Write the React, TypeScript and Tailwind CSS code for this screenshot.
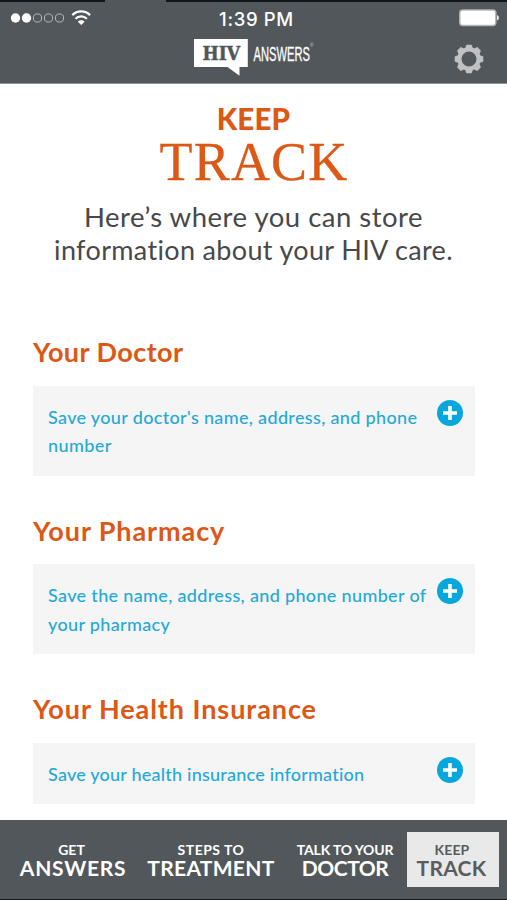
import clsx from "clsx";

const sections = [
  {
    title: "Your Doctor",
    titleClass: "tracking-[0.45px]",
    lines: [
      { text: "Save your doctor's name, address, and phone", className: "tracking-[0.34px]" },
      { text: "number", className: "tracking-[0.4px]" },
    ],
  },
  {
    title: "Your Pharmacy",
    titleClass: "tracking-[0.9px]",
    lines: [
      { text: "Save the name, address, and phone number of", className: "tracking-[0.34px]" },
      { text: "your pharmacy", className: "tracking-[0.34px]" },
    ],
  },
  {
    title: "Your Health Insurance",
    titleClass: "tracking-[0.93px]",
    lines: [{ text: "Save your health insurance information", className: "tracking-[0.22px]" }],
  },
];

const tabs = [
  { top: "GET", bottom: "ANSWERS", width: "w-[118px]", topClass: "-ml-[3px]", bottomClass: "tracking-[0.7px]" },
  { top: "STEPS TO", bottom: "TREATMENT", width: "w-[158px]", topClass: "tracking-[0.5px]", bottomClass: "tracking-[0.3px]" },
  { top: "TALK TO YOUR", bottom: "DOCTOR", width: "w-[110px]", topClass: "tracking-[-0.15px]", bottomClass: "tracking-[-0.5px]" },
  { top: "KEEP", bottom: "TRACK", width: "w-[92px]", topClass: "-ml-[2px] tracking-[0.1px]", bottomClass: "-ml-[3px] tracking-[0.3px]", active: true },
];

function StatusBar() {
  return (
    <div className="relative flex h-9 items-center justify-center">
      <svg className="absolute left-[10px] top-[6px]" width="84" height="20" viewBox="0 0 84 20">
        <circle cx="5.5" cy="10" r="4.7" fill="#fff" />
        <circle cx="16.5" cy="10" r="4.7" fill="#fff" />
        {[27.5, 38.5, 49.5].map((cx) => (
          <circle key={cx} cx={cx} cy="10" r="4.1" fill="none" stroke="#b9bbbd" strokeWidth="1" />
        ))}
        <g fill="none" stroke="#fff" strokeWidth="2.3">
          <path d="M62.3 7.1 A12.6 12.6 0 0 1 80.1 7.1" />
          <path d="M65.5 10.8 A8.1 8.1 0 0 1 76.9 10.8" />
        </g>
        <path d="M71.2 17 L67.8 13.7 A4.8 4.8 0 0 1 74.6 13.7 Z" fill="#fff" />
      </svg>
      <span className="-mt-[3px] ml-[6px] whitespace-nowrap font-['Inter',sans-serif] text-[18.5px] font-medium leading-5 tracking-[0.65px] text-white">
        1:39 PM
      </span>
      <svg className="absolute right-[8px] top-[7px]" width="40" height="18" viewBox="0 0 40 18">
        <rect x="0.8" y="1" width="36" height="15.5" rx="3" fill="#fff" stroke="#b4b6b8" strokeWidth="1.5" />
        <path d="M38 6 Q40 6.8 40 8.8 Q40 10.8 38 11.6 Z" fill="#e6e6e6" />
      </svg>
    </div>
  );
}

function Logo() {
  return (
    <svg width="122" height="40" viewBox="0 0 122 40">
      <path d="M0 1 H53.8 V29 H45.5 V37.8 L33.5 29 H0 Z" fill="#fff" />
      <text x="8.5" y="21.8" textLength="37.5" lengthAdjust="spacingAndGlyphs" fill="#50555a" fontFamily="DejaVu Serif, serif" fontWeight="700" fontSize="18.5" stroke="#50555a" strokeWidth="0.5">
        HIV
      </text>
      <text transform="translate(59.5 22.6) scale(0.6 1)" textLength="94" lengthAdjust="spacingAndGlyphs" fill="#fff" fontFamily="Liberation Sans, sans-serif" fontSize="20.5" stroke="#fff" strokeWidth="0.3">
        ANSWERS
      </text>
      <text x="116" y="8.5" fill="#c9cbcd" fontFamily="Liberation Sans, sans-serif" fontSize="4.5">
        ®
      </text>
    </svg>
  );
}

function Gear() {
  return (
    <svg width="30" height="30" viewBox="-15 -15 30 30">
      <circle r="9.6" fill="none" stroke="#bfc1c3" strokeWidth="4.2" />
      {[0, 45, 90, 135, 180, 225, 270, 315].map((deg) => (
        <path key={deg} transform={`rotate(${deg})`} d="M-4 -10.5 L-2.6 -14.3 H2.6 L4 -10.5 Z" fill="#bfc1c3" />
      ))}
    </svg>
  );
}

function Plus() {
  return (
    <svg className="absolute right-[12px] top-[14px]" width="26" height="26" viewBox="0 0 26 26">
      <circle cx="13" cy="13" r="13" fill="#06a7dc" />
      <path d="M13 6 V20 M6 13 H20" stroke="#fff" strokeWidth="3.6" />
    </svg>
  );
}

export default function App() {
  return (
    <div className="flex h-[900px] w-[507px] flex-col overflow-hidden bg-white font-['Lato',sans-serif]">
      <header className="relative h-[84px] shrink-0 border-b border-[#8f9294] bg-[#52575b]">
        <div className="flex h-[2px] justify-between">
          <div className="w-[105px] bg-[#11161b]" />
          <div className="w-[341px] bg-[#11161b]" />
        </div>
        <StatusBar />
        <div className="absolute left-[194px] top-[38px]">
          <Logo />
        </div>
        <button className="absolute left-[454px] top-[44px]" aria-label="Settings">
          <Gear />
        </button>
      </header>

      <main className="flex-1 overflow-hidden">
        <h1 className="flex flex-col items-center text-[#dc5816]">
          <span className="mt-[19px] whitespace-nowrap text-[29.5px] font-black leading-8 tracking-[0.2px]">KEEP</span>
          <span className="mt-[-1px] whitespace-nowrap pl-px font-['Liberation_Serif',serif] text-[54px] leading-[56px] tracking-[1.2px] [-webkit-text-stroke:0.3px_#dc5816]">
            TRACK
          </span>
        </h1>
        <p className="mt-[10px] flex flex-col items-center whitespace-nowrap text-[27px] leading-[33px] text-[#48484a]">
          <span className="text-[27.5px] tracking-[0.5px]">Here’s where you can store</span>
          <span className="tracking-[0.34px]">information about your HIV care.</span>
        </p>

        <div className="mt-[68px] flex flex-col gap-[37px] pl-[33px] pr-[32px]">
          {sections.map((section) => (
            <section key={section.title}>
              <h2 className={clsx("whitespace-nowrap text-[27px] font-bold leading-9 text-[#dc5816]", section.titleClass)}>
                {section.title}
              </h2>
              <div className="relative mt-[15.5px] bg-[#f5f5f5] px-[15px] pb-[16px] pt-[17px] text-[18px] font-medium leading-[28.5px] text-[#23a9d8]">
                {section.lines.map((line) => (
                  <div key={line.text} className={clsx("whitespace-nowrap", line.className)}>
                    {line.text}
                  </div>
                ))}
                <Plus />
              </div>
            </section>
          ))}
        </div>
      </main>

      <nav className="flex h-[80px] shrink-0 border-b border-[#11161b] bg-[#52575b] pl-[14px] pt-[12px]">
        {tabs.map((tab) => (
          <button
            key={tab.top}
            className={clsx(
              "flex h-[55px] shrink-0 flex-col items-center whitespace-nowrap pt-[9px] font-bold",
              tab.width,
              tab.active ? "ml-[7px] bg-[#e9e9e9] text-[#5a5c5f]" : "text-white",
            )}
          >
            <span className={clsx("text-[14px] leading-[17px]", tab.topClass)}>{tab.top}</span>
            <span className={clsx("text-[21px] leading-[20px]", tab.bottomClass)}>{tab.bottom}</span>
          </button>
        ))}
      </nav>
    </div>
  );
}
